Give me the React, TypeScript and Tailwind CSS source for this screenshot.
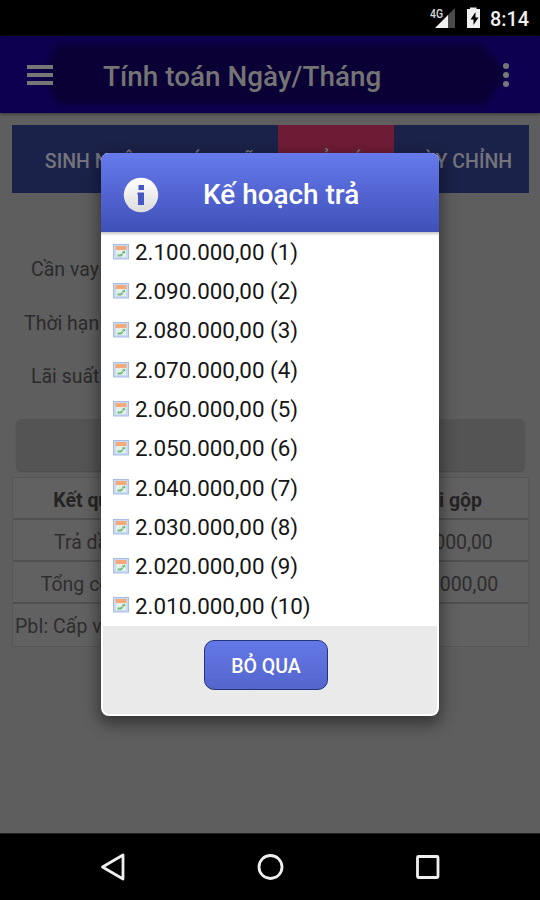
const tabs = [
  { label: "SINH NHẬT", className: "w-[153px] bg-[#1b2249] pl-[14px]" },
  { label: "TÍNH LÃI", className: "w-[113px] bg-[#1b2249]" },
  { label: "TRẢ GÓP", className: "w-[116px] bg-[#6e1c36]" },
  { label: "TÙY CHỈNH", className: "w-[135px] bg-[#1b2249]" },
];

const fields = [
  { label: "Cần vay", className: "pl-[31px]" },
  { label: "Thời hạn", className: "pl-[24px]" },
  { label: "Lãi suất", className: "pl-[31px]" },
];

const results = [
  { label: "Trả dần", value: "50.000,00" },
  { label: "Tổng cộng", value: "550.000,00" },
];

const payments = [
  "2.100.000,00",
  "2.090.000,00",
  "2.080.000,00",
  "2.070.000,00",
  "2.060.000,00",
  "2.050.000,00",
  "2.040.000,00",
  "2.030.000,00",
  "2.020.000,00",
  "2.010.000,00",
];

export default function App() {
  return (
    <div className="relative flex h-[900px] w-[540px] flex-col overflow-hidden bg-[#5e5e5e] font-['Roboto','Noto_Sans',sans-serif]">
      <StatusBar />
      <AppBar />
      <main className="flex-1 px-3 pt-3">
        <nav className="flex h-[68px] w-[517px]">
          {tabs.map((t) => (
            <div
              key={t.label}
              className={`flex items-center justify-center pt-[5px] text-[19.5px] font-medium whitespace-nowrap text-[#74747c] ${t.className}`}
            >
              {t.label}
            </div>
          ))}
        </nav>

        <div className="-mx-3 mt-[49px]">
          {fields.map((f) => (
            <div key={f.label} className={`flex h-[53.5px] items-center pt-[2px] text-[19.5px] text-[#2b2b2b] ${f.className}`}>
              {f.label}
            </div>
          ))}
        </div>

        <div className="mx-1 mt-[16px] h-[52px] w-[509px] rounded-md bg-[#545454] shadow-[0_1px_1px_#4c4c4c]" />

        <div className="mt-[6px] w-[517px] border border-[#575757] bg-[#616161] text-[19.5px] text-[#2e2e2e]">
          <div className="flex h-[42px] items-center border-b-2 border-[#505050] pt-[6px] font-bold text-[#242424]">
            <div className="w-[147px] text-center">Kết quả</div>
            <div className="flex-1" />
            <div className="w-[156px] text-center">Lãi gộp</div>
          </div>
          {results.map((r) => (
            <div key={r.label} className="flex h-[42px] items-center border-b-2 border-[#505050] pt-[6px]">
              <div className="w-[147px] text-center">{r.label}</div>
              <div className="flex-1" />
              <div className="w-[156px] text-center">{r.value}</div>
            </div>
          ))}
          <div className="flex h-[42px] items-center pt-[5px] pl-[2px]">PbI: Cấp vốn</div>
        </div>
      </main>
      <NavigationBar />
      <PaymentDialog />
    </div>
  );
}

function StatusBar() {
  return (
    <div className="flex h-9 shrink-0 justify-end bg-black text-[#e8e8e8]">
      <svg width="110" height="36" viewBox="0 0 110 36">
        <text x="0" y="17.500" fill="#d8d8d8" fontSize="12.500" fontWeight="500" textLength="13" lengthAdjust="spacingAndGlyphs">
          4G
        </text>
        <path d="M25 8V28H17V16Z" fill="#4a4a4a" />
        <path d="M18 15V28H5Z" fill="#f2f2f2" />
        <path d="M40 9v-1.500h6.500V9H50v19H37V9z" fill="#f0f0f0" />
        <path d="M45.500 12l-5 7.500h3V25l5-7.500h-3z" fill="#000" />
        <text x="60" y="26" fill="#f0f0f0" fontSize="20" fontWeight="500" textLength="39" lengthAdjust="spacingAndGlyphs">
          8:14
        </text>
      </svg>
    </div>
  );
}

function AppBar() {
  return (
    <header className="relative h-[77px] shrink-0 bg-[#0e0050] shadow-[0_1px_3px_#333]">
      <svg className="absolute inset-0" width="540" height="77" viewBox="0 0 540 77">
        <g className="blur-[3px]">
          <path d="M57 8H484L508 37 487 69H57L42 38Z" fill="#0a0036" />
          <path d="M486 8L513 37 489 69" fill="none" stroke="#10005a" strokeWidth="4" />
          <path d="M53 8L30 38 53 69" fill="none" stroke="#0f0052" strokeWidth="5" />
        </g>
      </svg>
      <div className="relative flex h-full items-center pt-[3px]">
        <div className="ml-[27px] flex w-[26px] flex-col gap-[4px] pb-[3px]">
          <div className="h-[4px] bg-[#777]" />
          <div className="h-[4px] bg-[#777]" />
          <div className="h-[4px] bg-[#777]" />
        </div>
        <h1 className="ml-[50px] pt-px text-[27.9px] font-medium whitespace-nowrap text-[#747474]">Tính toán Ngày/Tháng</h1>
        <div className="mr-[31px] ml-auto flex flex-col gap-[3px] pb-[2px]">
          <div className="size-[6px] rounded-full bg-[#777]" />
          <div className="size-[6px] rounded-full bg-[#777]" />
          <div className="size-[6px] rounded-full bg-[#777]" />
        </div>
      </div>
    </header>
  );
}

function PaymentDialog() {
  return (
    <div className="absolute top-[153px] left-[101px] flex h-[563px] w-[338px] flex-col overflow-hidden rounded-lg bg-white shadow-[0_6px_16px_2px_rgba(0,0,0,0.45)]">
      <div className="flex h-[79px] shrink-0 items-center bg-linear-to-b from-[#667aec] to-[#3f50b8] pt-[5px]">
        <InfoIcon />
        <h2 className="ml-[44px] text-[27.9px] font-medium whitespace-nowrap text-white">Kế hoạch trả</h2>
      </div>
      <ul className="h-[394px] shrink-0 shadow-[inset_0_4px_3px_-2px_#c8c8c8]">
        {payments.map((amount, i) => (
          <li key={amount} className="flex h-[39.3px] items-center gap-[6px] pl-3 text-[22.4px] whitespace-nowrap text-[#161616]">
            <EntryIcon />
            <span className="pt-[2px]">
              {amount} ({i + 1})
            </span>
          </li>
        ))}
      </ul>
      <div className="mx-[2px] mb-[2px] flex flex-1 justify-center rounded-b-md bg-[#eaeaea] pt-[14px] pr-2">
        <button className="h-[50px] w-[124px] rounded-[10px] border border-[#24347c] bg-linear-to-b from-[#6478e8] to-[#5465cc] pt-[3px] text-[19.5px] font-medium text-white">
          BỎ QUA
        </button>
      </div>
    </div>
  );
}

function InfoIcon() {
  return (
    <svg className="ml-[22px] shrink-0" width="36" height="36" viewBox="0 0 36 36">
      <defs>
        <linearGradient id="disc" x1="0" y1="0" x2="0" y2="1">
          <stop offset="0" stopColor="#fff" />
          <stop offset="1" stopColor="#dcdcdc" />
        </linearGradient>
      </defs>
      <circle cx="18" cy="18" r="17.200" fill="url(#disc)" />
      <path d="M15.500 8h5.500v5h-5.500zM14.500 15.500h6.500v12.500h-6v-10h-.5z" fill="#4658c4" />
    </svg>
  );
}

function EntryIcon() {
  return (
    <svg className="shrink-0" width="16" height="16" viewBox="0 0 16 16">
      <rect x="0.500" y="0.500" width="15" height="14.500" fill="#c9daf3" stroke="#a9bce6" />
      <rect x="2.500" y="2" width="11" height="4" fill="#f5a878" />
      <path d="M3 6h10v7H3z" fill="#e6efe6" />
      <path d="M4.500 11.500h2.500M7 12l2.500-2M9.500 9l2.500-1.500" fill="none" stroke="#6fbd85" strokeWidth="2.200" />
    </svg>
  );
}

function NavigationBar() {
  return (
    <div className="h-[67px] shrink-0 border-t border-[#222] bg-black">
      <svg width="540" height="66" viewBox="0 0 540 66" fill="none" stroke="#efefef" strokeWidth="2.800">
        <path d="M123 21V45L102.500 33Z" strokeLinejoin="round" />
        <circle cx="270.500" cy="33" r="11.500" />
        <rect x="417.500" y="22.500" width="20.500" height="21" rx="1" />
      </svg>
    </div>
  );
}
